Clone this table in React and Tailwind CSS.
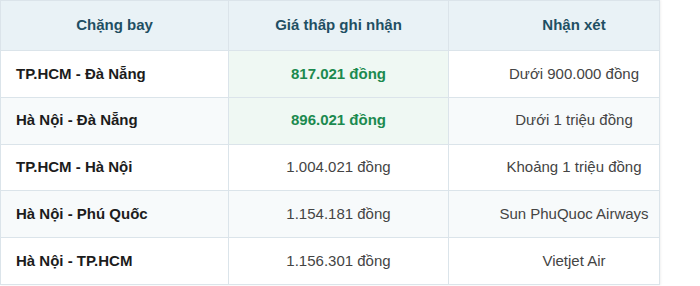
export default function App() {
  const rows = [
    { route: "TP.HCM - Đà Nẵng", price: "817.021 đồng", note: "Dưới 900.000 đồng", hl: true },
    { route: "Hà Nội - Đà Nẵng", price: "896.021 đồng", note: "Dưới 1 triệu đồng", hl: true },
    { route: "TP.HCM - Hà Nội", price: "1.004.021 đồng", note: "Khoảng 1 triệu đồng" },
    { route: "Hà Nội - Phú Quốc", price: "1.154.181 đồng", note: "Sun PhuQuoc Airways" },
    { route: "Hà Nội - TP.HCM", price: "1.156.301 đồng", note: "Vietjet Air" },
  ];
  return (
    <div className="bg-white w-[700px] h-[286px] overflow-hidden" style={{ fontFamily: '"Liberation Sans", Arial, sans-serif' }}>
      <table className="w-[659px] border-collapse table-fixed text-[15px] shadow-[1px_0_2px_rgba(0,0,0,0.06)]">
        <colgroup>
          <col className="w-[228px]" />
          <col className="w-[220px]" />
          <col className="w-[211px]" />
        </colgroup>
        <thead>
          <tr className="bg-[#e9f2f6] h-[50px]">
            <th className="border border-[#dbe4ea] font-bold text-[#1f4f63] text-center">Chặng bay</th>
            <th className="border border-[#dbe4ea] font-bold text-[#1f4f63] text-center">Giá thấp ghi nhận</th>
            <th className="border border-[#dbe4ea] font-bold text-[#1f4f63] text-center pl-[40px]">Nhận xét</th>
          </tr>
        </thead>
        <tbody>
          {rows.map((r, i) => (
            <tr key={i} className={`h-[46.8px] ${i % 2 === 1 ? "bg-[#f7fafb]" : "bg-white"}`}>
              <td className="border border-[#dbe4ea] font-bold text-[#1c1c1c] pl-[15px]">{r.route}</td>
              <td className={`border border-[#dbe4ea] text-center ${r.hl ? "bg-[#eff8f3] text-[#1b8a4f] font-bold" : "text-[#444]"}`}>{r.price}</td>
              <td className="border border-[#dbe4ea] text-center pl-[40px] text-[#444]">{r.note}</td>
            </tr>
          ))}
        </tbody>
      </table>
    </div>
  );
}
